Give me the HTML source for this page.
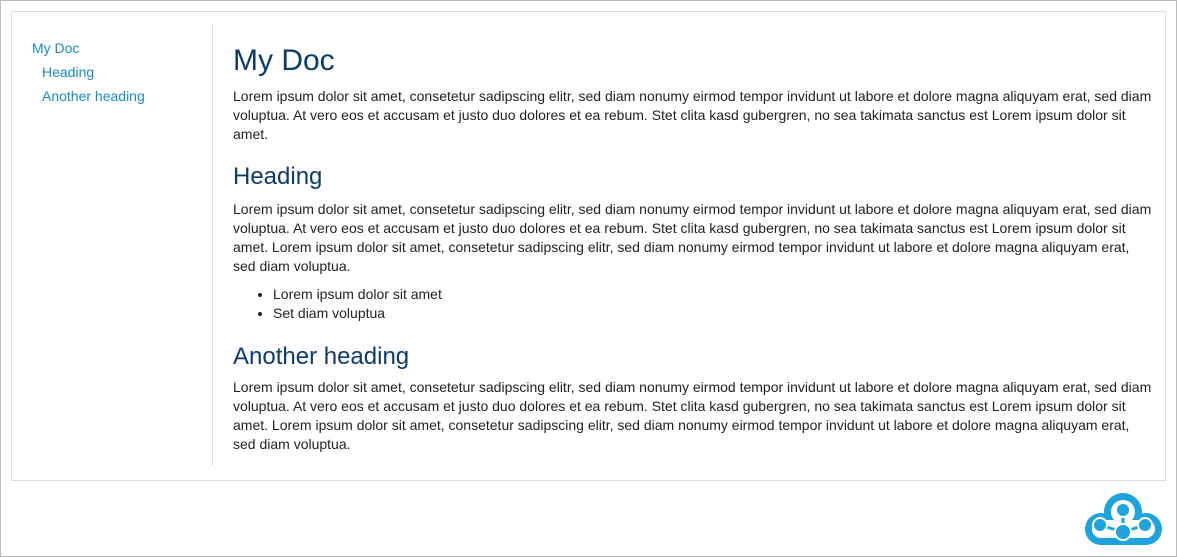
<!DOCTYPE html>
<html><head><style>
body{margin:0;width:1177px;height:557px;overflow:hidden;background:#fff;font-family:"Liberation Sans",sans-serif;}
.outer{position:absolute;left:0;top:0;width:1175px;height:555px;border:1px solid #bbb;}
.box{position:absolute;left:11px;top:11px;width:1153px;height:468px;border:1px solid #ddd;}
.side{position:absolute;left:20px;top:24px;font-size:14px;line-height:24px;}
.side a{color:#1a8ac6;text-decoration:none;display:block}
.div{position:absolute;left:200px;top:12px;width:1px;height:442px;background:#ddd}
.main{position:absolute;left:221px;top:31px;width:922px;font-size:14px;line-height:19px;color:#222}
h1{font-size:30px;font-weight:normal;color:#0c3c6c;margin:0 0 8px;line-height:36px}
h2{font-size:24px;font-weight:normal;color:#0c3c6c;margin:18px 0 8px;line-height:30px}
h2.b{margin:19px 0 6px}
p{margin:0}
ul{margin:9px 0 0;padding-left:40px}
.logo{position:absolute;left:1083px;top:492px}
</style></head><body>
<div class="outer"></div>
<div class="box">
<div class="side"><a href="#">My Doc</a><a href="#" style="padding-left:10px">Heading</a><a href="#" style="padding-left:10px">Another heading</a></div>
<div class="div"></div>
<div class="main">
<h1>My Doc</h1>
<p>Lorem ipsum dolor sit amet, consetetur sadipscing elitr, sed diam nonumy eirmod tempor invidunt ut labore et dolore magna aliquyam erat, sed diam voluptua. At vero eos et accusam et justo duo dolores et ea rebum. Stet clita kasd gubergren, no sea takimata sanctus est Lorem ipsum dolor sit amet.</p>
<h2>Heading</h2>
<p>Lorem ipsum dolor sit amet, consetetur sadipscing elitr, sed diam nonumy eirmod tempor invidunt ut labore et dolore magna aliquyam erat, sed diam voluptua. At vero eos et accusam et justo duo dolores et ea rebum. Stet clita kasd gubergren, no sea takimata sanctus est Lorem ipsum dolor sit amet. Lorem ipsum dolor sit amet, consetetur sadipscing elitr, sed diam nonumy eirmod tempor invidunt ut labore et dolore magna aliquyam erat, sed diam voluptua.</p>
<ul><li>Lorem ipsum dolor sit amet</li><li>Set diam voluptua</li></ul>
<h2 class="b">Another heading</h2>
<p>Lorem ipsum dolor sit amet, consetetur sadipscing elitr, sed diam nonumy eirmod tempor invidunt ut labore et dolore magna aliquyam erat, sed diam voluptua. At vero eos et accusam et justo duo dolores et ea rebum. Stet clita kasd gubergren, no sea takimata sanctus est Lorem ipsum dolor sit amet. Lorem ipsum dolor sit amet, consetetur sadipscing elitr, sed diam nonumy eirmod tempor invidunt ut labore et dolore magna aliquyam erat, sed diam voluptua.</p>
</div>
</div>
<svg class="logo" width="82" height="56" viewBox="0 0 82 56">
<g fill="#1ea3dc"><circle cx="40" cy="20" r="19"/><circle cx="18" cy="37" r="16"/><circle cx="63" cy="37" r="16"/><rect x="18" y="22" width="45" height="31"/></g>
<g fill="#fff"><circle cx="40" cy="20" r="12"/><circle cx="18" cy="37" r="9"/><circle cx="63" cy="37" r="9"/><rect x="18" y="28" width="45" height="18"/></g>
<g stroke="#1ea3dc" stroke-width="3"><line x1="40" y1="20" x2="40" y2="40"/><line x1="17" y1="33" x2="40" y2="40"/><line x1="62" y1="33" x2="40" y2="40"/></g>
<g fill="#1ea3dc" stroke="#fff" stroke-width="2"><circle cx="40" cy="18" r="7"/><circle cx="17" cy="33" r="7"/><circle cx="62" cy="33" r="7"/><circle cx="40" cy="40" r="8"/></g>
</svg>
</body></html>
